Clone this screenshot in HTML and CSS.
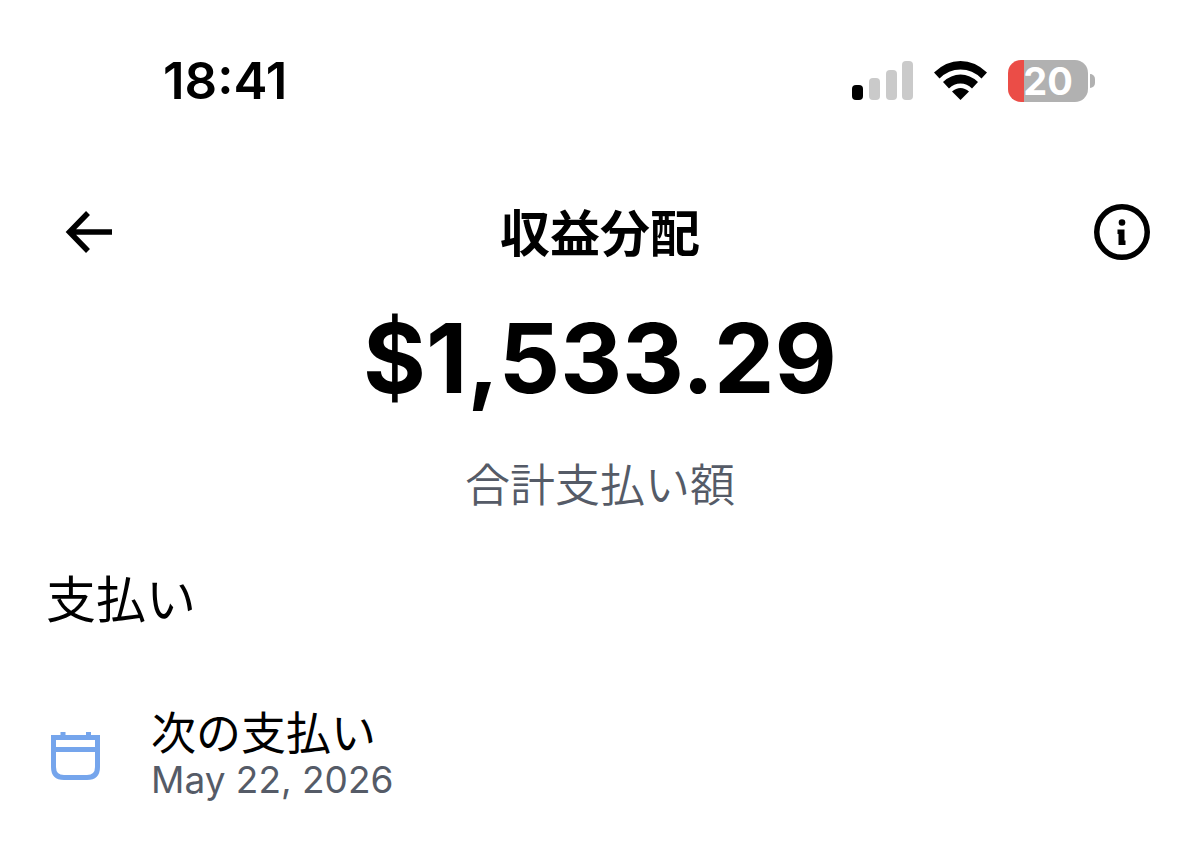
FILE: index.html
```html
<!DOCTYPE html>
<html lang="ja">
<head>
<meta charset="utf-8">
<meta name="viewport" content="width=device-width, initial-scale=1">
<title>収益分配</title>
<link rel="stylesheet" href="styles.css">
</head>
<body>
<div class="status">
  <time class="clock">18:41</time>
  <div class="indicators">
    <svg class="signal" viewBox="0 0 62 40" width="62" height="40" aria-hidden="true">
      <rect x="0" y="24" width="11" height="15" rx="4" fill="#000"/>
      <rect x="17" y="17" width="11" height="22" rx="4" fill="#cacaca"/>
      <rect x="34" y="9" width="11" height="30" rx="4" fill="#cacaca"/>
      <rect x="50" y="0" width="11" height="39" rx="4" fill="#cacaca"/>
    </svg>
    <svg class="wifi" viewBox="0 0 54 40" width="54" height="40" aria-hidden="true">
      <path d="M0 11.500Q12 0 26.500 0T53 11.500L47.500 17.500Q38.500 8.500 26.500 8.500T5.500 17.500Z"/>
      <path d="M9 21Q17 13.500 26.500 13.500T44 21L38 27.500Q33 22.500 26.500 22.500T15 27.500Z"/>
      <path d="M18 30.500Q22 27 26.500 27T35 30.500L26.500 39Z"/>
    </svg>
    <div class="battery"><span class="level">20</span></div>
  </div>
</div>
<header class="bar">
  <button class="icon-button back" type="button" aria-label="戻る">
    <svg viewBox="0 0 50 44" width="50" height="44" fill="none" stroke="#000" stroke-width="5.500">
      <path d="M48 22H6M24 3L5.500 22L24 41"/>
    </svg>
  </button>
  <h1 class="title">収益分配</h1>
  <button class="icon-button info" type="button" aria-label="情報">
    <svg viewBox="0 0 56 56" width="56" height="56">
      <circle cx="28" cy="28" r="25.250" fill="none" stroke="#000" stroke-width="5.500"/>
      <circle cx="28" cy="18.500" r="3.300"/>
      <path d="M23.500 25.500H30.500V36.500H31.500V41H24.500V30H23.500Z"/>
    </svg>
  </button>
</header>
<main>
  <section class="total">
    <p class="amount">$1,533.29</p>
    <p class="caption">合計支払い額</p>
  </section>
  <section class="payouts">
    <h2 class="heading">支払い</h2>
    <div class="row">
      <svg class="calendar" viewBox="0 0 50 50" width="50" height="50" fill="none" stroke="#75a5ec" stroke-width="5" aria-hidden="true">
        <path d="M2.500 6.500H46.500V36Q46.500 46.500 36 46.500H13Q2.500 46.500 2.500 36ZM2.500 18.500H46.500M12 1V6M37.500 1V6"/>
      </svg>
      <div>
        <p class="name">次の支払い</p>
        <p class="date">May 22, 2026</p>
      </div>
    </div>
  </section>
</main>
</body>
</html>
```
FILE: styles.css
```css
* {
  box-sizing: border-box;
}

body,
h1,
h2,
p {
  margin: 0;
}

body {
  background: #fff;
  color: #000;
  font-family: Inter, "Noto Sans CJK JP", sans-serif;
}

.status {
  display: flex;
  justify-content: space-between;
  align-items: center;
  padding: 48px 112px 0 163px;
}

.clock {
  font-size: 51px;
  font-weight: 600;
  line-height: 66px;
}

.indicators {
  display: flex;
  align-items: center;
  gap: 20px;
}

.wifi {
  fill: #000;
}

.battery {
  position: relative;
  width: 80px;
  height: 42px;
  border-radius: 13px;
  background: linear-gradient(to right, #eb4d47 16px, #b1b1b1 16px);
}

.battery::after {
  content: "";
  position: absolute;
  left: 82px;
  top: 14px;
  width: 5px;
  height: 14px;
  border-radius: 0 7px 7px 0;
  background: #b1b1b1;
}

.level {
  display: block;
  color: #fff;
  font-size: 38px;
  font-weight: 700;
  line-height: 42px;
  text-align: center;
}

.bar {
  display: grid;
  grid-template-columns: 1fr auto 1fr;
  align-items: center;
  padding: 80px 50px 0;
}

.icon-button {
  display: flex;
  padding: 0;
  border: 0;
  background: none;
}

.back {
  justify-self: start;
  padding-left: 14px;
}

.info {
  justify-self: end;
}

.title {
  padding-top: 4px;
  font-size: 50px;
  font-weight: 700;
  line-height: 72px;
}

.total {
  text-align: center;
}

.amount {
  padding-top: 32px;
  font-size: 96px;
  font-weight: 700;
  line-height: 112px;
}

.caption {
  padding-top: 42px;
  color: #555b67;
  font-size: 45px;
  font-weight: 350;
  line-height: 60px;
}

.payouts {
  padding: 48px 46px 0;
}

.heading {
  font-size: 50px;
  font-weight: 400;
  line-height: 72px;
}

.row {
  display: flex;
  align-items: center;
  gap: 50px;
  padding: 74px 5px 0;
}

.name {
  font-size: 45px;
  line-height: 48px;
}

.date {
  color: #555b67;
  font-size: 37px;
  line-height: 44px;
}
```
